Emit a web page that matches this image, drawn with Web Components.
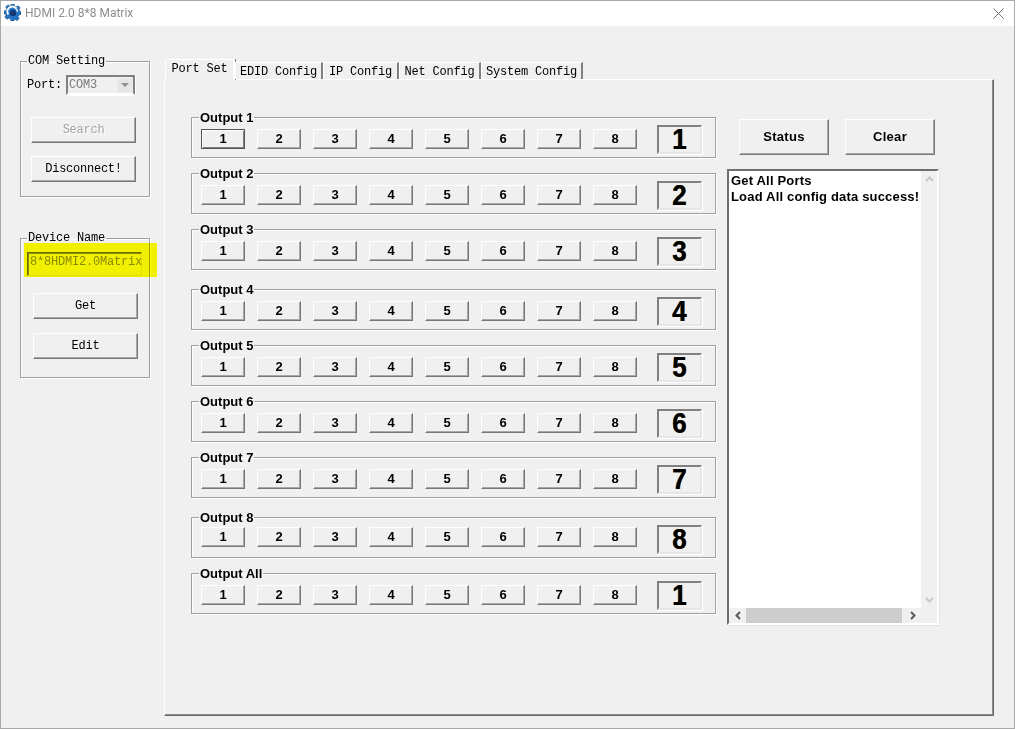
<!DOCTYPE html>
<html>
<head>
<meta charset="utf-8">
<title>HDMI 2.0 8*8 Matrix</title>
<style>
  html, body { margin: 0; padding: 0; background: #fff; }
  body { font-family: "Liberation Sans", Arial, sans-serif; width: 1017px; height: 729px; overflow: hidden; }
  .left-col { display: flex; flex-direction: column; width: 130px; margin-right: 14px; padding-top: 28px; }
  .device-box { margin-top: 34px; }
  .port-row { display: flex; align-items: center; gap: 4px; padding: 7px 0 0 6px; font: 12px "Liberation Mono", monospace; letter-spacing: -.2px; }
  .stack { display: flex; flex-direction: column; align-items: flex-start; }
  .com-stack { padding: 22px 0 14px 10px; gap: 13px; }
  .dev-stack { padding: 0 0 18px 12px; gap: 14px; margin-top: 17px; }
  .name-wrap { padding: 7px 0 0 6px; }
  .outputs { display: flex; flex-direction: column; gap: 8px; width: 525px; }
  .side { display: flex; flex-direction: column; padding-top: 9px; --btn-font: bold 13px "Liberation Sans", sans-serif; --btn-ls: .3px; --w: 90px; --h: 36px; }
  .side-btns { display: flex; gap: 16px; padding-left: 12px; }
</style>
</head>
<body>

<template id="win-window-tpl">
  <style>
    :host { display: flex; flex-direction: column; box-sizing: border-box; width: 1015px; height: 729px; border: 1px solid #a9a9a9; background: #f0f0f0; color: #000; }
    .client { flex: 1; display: flex; padding-left: 19px; min-height: 0; }
  </style>
  <slot name="title"></slot>
  <div class="client"><slot></slot></div>
</template>

<template id="title-bar-tpl">
  <style>
    :host { display: flex; align-items: center; height: 25px; background: #fff; flex: none; }
    svg.logo { width: 17px; height: 17px; margin: 0 4px 2px 3px; }
    .t { font: 12px Roboto, sans-serif; color: #8d8d8d; flex: 1; padding-bottom: 1px; }
    svg.x { width: 11px; height: 11px; margin-right: 10px; }
  </style>
  <svg class="logo" viewBox="0 0 17 17">
    <path d="M7 0h3l.5 2.200 1.600.7 2-1.100 2 2-1.100 2 .7 1.600L17 7.500v3l-2.300.5-.7 1.600 1.100 2-2 2-2-1.100-1.600.7L9.900 17H7l-.5-2.200-1.600-.7-2 1.100-2-2 1.100-2-.7-1.600L0 10V7l2.200-.5.700-1.600-1.100-2 2-2 2 1.100 1.600-.7z" fill="#2474c4" stroke="#143f7c" stroke-width=".6"/>
    <circle cx="9" cy="9" r="3.200" fill="#123a74"/>
    <path d="M4.300 10.500A5 5 0 0 1 12.500 4.700" fill="none" stroke="#fff" stroke-width="2"/>
    <path d="M12.500 4.700l1 3" fill="none" stroke="#dbe9f7" stroke-width="1.500"/>
  </svg>
  <span class="t"><slot></slot></span>
  <svg class="x" viewBox="0 0 11 11"><path d="M.5.5l10 10M10.500.5l-10 10" stroke="#6f6f6f" stroke-width="1" fill="none"/></svg>
</template>

<template id="group-box-tpl">
  <style>
    :host { display: block; }
    fieldset { margin: 0; padding: 0; min-width: 0; box-sizing: border-box; height: 100%; border: 1px solid #a0a0a0; box-shadow: 1px 1px 0 #fff, inset 1px 1px 0 #fff; }
    legend { margin-left: var(--legend-x, 6px); padding: 0 1px; height: 14px; font: var(--legend-font, 12px/14px "Liberation Mono", monospace); letter-spacing: var(--legend-ls, -.2px); white-space: nowrap; }
  </style>
  <fieldset><legend></legend><slot></slot></fieldset>
</template>

<template id="win-button-tpl">
  <style>
    :host { display: inline-flex; flex: none; box-sizing: border-box; width: var(--w, 105px); height: var(--h, 26px); }
    button { all: unset; box-sizing: border-box; width: 100%; height: 100%; display: flex; align-items: center; justify-content: center; text-align: center; background: #f0f0f0; color: #000; font: var(--btn-font, 12px "Liberation Mono", monospace); letter-spacing: var(--btn-ls, -.25px); border: 1px solid; border-color: #fff #777 #777 #fff; box-shadow: inset -1px -1px 0 #a8a8a8; padding-bottom: 1px; }
    :host([disabled]) button { color: #a3a3a3; text-shadow: 1px 1px 0 #fff; }
    :host([active]) button { border-color: #555; box-shadow: inset 1px 1px 0 #fff, inset -1px -1px 0 #808080; padding-bottom: 2px; }
  </style>
  <button part="b"><slot></slot></button>
</template>

<template id="num-display-tpl">
  <style>
    :host { display: flex; flex: none; align-items: center; justify-content: center; box-sizing: border-box; width: 45px; height: 29px; border: 2px solid; border-color: #808080 #e6e6e6 #e6e6e6 #808080; box-shadow: 1px 1px 0 #fff; font: bold 26px/25px "Liberation Sans", sans-serif; color: #000; background: #f0f0f0; text-shadow: -.4px 0 #b86a00, .5px 0 #0a5fb0; }
    span { display: inline-block; transform: scaleY(1.12); }
  </style>
  <span><slot></slot></span>
</template>

<template id="output-row-tpl">
  <style>
    :host { display: block; height: 48px; --legend-font: bold 13px/16px "Liberation Sans", sans-serif; --legend-ls: 0; --legend-x: 7px; }
    :host([extra]) { margin-top: 4px; }
    group-box { height: 48px; }
    .row { display: flex; align-items: flex-start; gap: 12px; padding: 5px 0 0 9px; --w: 44px; --h: 20px; --btn-font: bold 13px "Liberation Sans", sans-serif; --btn-ls: 0; }
    :host([raised]) .row { padding-top: 3px; }
    num-display { margin: -4px 0 0 8px; }
    :host([raised]) num-display { margin-top: -2px; }
  </style>
  <group-box>
    <div class="row"></div>
  </group-box>
</template>

<template id="tab-strip-tpl">
  <style>
    :host { display: flex; align-items: flex-end; height: 20px; padding-left: 1px; font: 12px/14px "Liberation Mono", monospace; letter-spacing: -.2px; flex: none; position: relative; z-index: 1; }
    .tab { box-sizing: border-box; height: 17px; display: flex; align-items: center; justify-content: center; border-top: 1px solid #fff; border-left: 1px solid #fff; border-right: 2px solid #808080; white-space: nowrap; padding-top: 1px; }
    .tab.on { height: 21px; margin-bottom: -1px; border-right-color: #fff; box-shadow: 1px 0 0 #808080; background: #f0f0f0; padding: 0 0 3px; border-top-left-radius: 2px; }
  </style>
  <div class="tab on" style="width:70px">Port Set</div>
  <div class="tab" style="width:88px">EDID Config</div>
  <div class="tab" style="width:76px">IP Config</div>
  <div class="tab" style="width:82px">Net Config</div>
  <div class="tab" style="width:102px">System Config</div>
</template>

<template id="tab-panel-tpl">
  <style>
    :host { display: flex; flex-direction: column; box-sizing: border-box; width: 830px; height: 690px; padding-top: 33px; flex: none; }
    .page { flex: 1; box-sizing: border-box; display: flex; gap: 11px; padding: 30px 0 0 26px; border: 1px solid; border-color: #fff #6b6b6b #6b6b6b #fff; box-shadow: inset -1px -1px 0 #8c8c8c; }
  </style>
  <slot name="tabs"></slot>
  <div class="page"><slot></slot></div>
</template>

<template id="log-panel-tpl">
  <style>
    :host { display: grid; grid-template-columns: 1fr 16px; grid-template-rows: 1fr 15px; box-sizing: border-box; width: 212px; height: 456px; margin-top: 14px; border: 2px solid; border-color: #6f6f6f #fff #fff #6f6f6f; box-shadow: 1px 1px 0 #e4e4e4; font: bold 13px/16px "Liberation Sans", sans-serif; letter-spacing: .18px; }
    .text { background: #fff; padding: 2px 0 0 2px; white-space: pre; overflow: hidden; }
    .vbar { display: flex; flex-direction: column; align-items: center; justify-content: space-between; padding: 5px 0 5px; }
    .hbar { display: flex; align-items: center; grid-column: 1; }
    .thumb { flex: 1; height: 100%; background: #cdcdcd; margin: 0 2px 0 0; }
    .btn { width: 16px; display: flex; justify-content: center; flex: none; }
    .hbar .btn { width: 17px; }
    svg { display: block; }
  </style>
  <div class="text"><slot></slot></div>
  <div class="vbar">
    <svg width="9" height="6" viewBox="0 0 9 6"><path d="M1 5l3.500-3.500L8 5" fill="none" stroke="#c8c8c8" stroke-width="2"/></svg>
    <svg width="9" height="6" viewBox="0 0 9 6"><path d="M1 1l3.500 3.500L8 1" fill="none" stroke="#c8c8c8" stroke-width="2"/></svg>
  </div>
  <div class="hbar">
    <span class="btn"><svg width="6" height="9" viewBox="0 0 6 9"><path d="M5 1L1.500 4.500 5 8" fill="none" stroke="#5a5a5a" stroke-width="2"/></svg></span>
    <div class="thumb"></div>
    <span class="btn"><svg width="6" height="9" viewBox="0 0 6 9"><path d="M1 1l3.500 3.500L1 8" fill="none" stroke="#5a5a5a" stroke-width="2"/></svg></span>
  </div>
  <div></div>
</template>

<template id="combo-box-tpl">
  <style>
    :host { display: flex; box-sizing: border-box; width: 69px; height: 20px; border: 2px solid; border-color: #808080 #808080 #fff #808080; box-shadow: 0 1px 0 #fff, 1px 0 0 #fff; color: #7a7a7a; font: 12px/16px "Liberation Mono", monospace; letter-spacing: -.2px; align-items: center; justify-content: space-between; padding-left: 1px; }
    .arrow { box-sizing: border-box; width: 16px; height: 15px; background: #e6e6e6; border: 1px solid #ededed; display: flex; align-items: center; justify-content: center; }
    i { display: block; width: 0; height: 0; border: 4px solid transparent; border-top: 4px solid #909090; border-bottom: 0; }
  </style>
  <slot></slot><span class="arrow"><i></i></span>
</template>

<template id="name-input-tpl">
  <style>
    :host { display: block; position: relative; box-sizing: border-box; width: 115px; height: 24px; border: 1px solid; border-color: #6e6e6e #e0e0e0 #e0e0e0 #6e6e6e; box-shadow: inset 1px 1px 0 #8a8a8a; color: #8a8a8a; font: 12px/19px "Liberation Mono", monospace; letter-spacing: -.2px; padding-left: 2px; white-space: nowrap; }
    .mark { position: absolute; left: -4px; top: -10px; width: 133px; height: 34px; background: #ffff00; mix-blend-mode: multiply; pointer-events: none; }
  </style>
  <slot></slot><span class="mark"></span>
</template>

<script>
function tplClass(id) {
  return class extends HTMLElement {
    constructor() {
      super();
      this.attachShadow({ mode: 'open' }).appendChild(document.getElementById(id).content.cloneNode(true));
    }
  };
}

class GroupBox extends tplClass('group-box-tpl') {
  connectedCallback() {
    this.shadowRoot.querySelector('legend').textContent = this.getAttribute('label') || '';
  }
}

class OutputRow extends tplClass('output-row-tpl') {
  connectedCallback() {
    this.shadowRoot.querySelector('group-box').setAttribute('label', this.getAttribute('label'));
    const row = this.shadowRoot.querySelector('.row');
    const active = this.getAttribute('active');
    for (let i = 1; i <= 8; i++) {
      const b = document.createElement('win-button');
      b.textContent = i;
      if (String(i) === active) b.setAttribute('active', '');
      row.appendChild(b);
    }
    const d = document.createElement('num-display');
    d.textContent = this.getAttribute('value');
    row.appendChild(d);
  }
}

customElements.define('group-box', GroupBox);
customElements.define('win-window', tplClass('win-window-tpl'));
customElements.define('title-bar', tplClass('title-bar-tpl'));
customElements.define('win-button', tplClass('win-button-tpl'));
customElements.define('num-display', tplClass('num-display-tpl'));
customElements.define('output-row', OutputRow);
customElements.define('tab-strip', tplClass('tab-strip-tpl'));
customElements.define('tab-panel', tplClass('tab-panel-tpl'));
customElements.define('log-panel', tplClass('log-panel-tpl'));
customElements.define('combo-box', tplClass('combo-box-tpl'));
customElements.define('name-input', tplClass('name-input-tpl'));
</script>

<win-window>
  <title-bar slot="title">HDMI 2.0 8*8 Matrix</title-bar>

  <div class="left-col">
    <group-box label="COM Setting">
      <div class="port-row">Port:<combo-box>COM3</combo-box></div>
      <div class="stack com-stack">
        <win-button disabled>Search</win-button>
        <win-button>Disconnect!</win-button>
      </div>
    </group-box>
    <group-box class="device-box" label="Device Name">
      <div class="name-wrap"><name-input>8*8HDMI2.0Matrix</name-input></div>
      <div class="stack dev-stack">
        <win-button>Get</win-button>
        <win-button>Edit</win-button>
      </div>
    </group-box>
  </div>

  <tab-panel>
    <tab-strip slot="tabs"></tab-strip>
    <div class="outputs">
      <output-row label="Output 1" value="1" active="1"></output-row>
      <output-row label="Output 2" value="2"></output-row>
      <output-row label="Output 3" value="3"></output-row>
      <output-row label="Output 4" value="4" extra></output-row>
      <output-row label="Output 5" value="5"></output-row>
      <output-row label="Output 6" value="6"></output-row>
      <output-row label="Output 7" value="7"></output-row>
      <output-row label="Output 8" value="8" extra raised></output-row>
      <output-row label="Output All" value="1"></output-row>
    </div>
    <div class="side">
      <div class="side-btns">
        <win-button>Status</win-button>
        <win-button>Clear</win-button>
      </div>
      <log-panel>Get All Ports
Load All config data success!</log-panel>
    </div>
  </tab-panel>
</win-window>
</body>
</html>
